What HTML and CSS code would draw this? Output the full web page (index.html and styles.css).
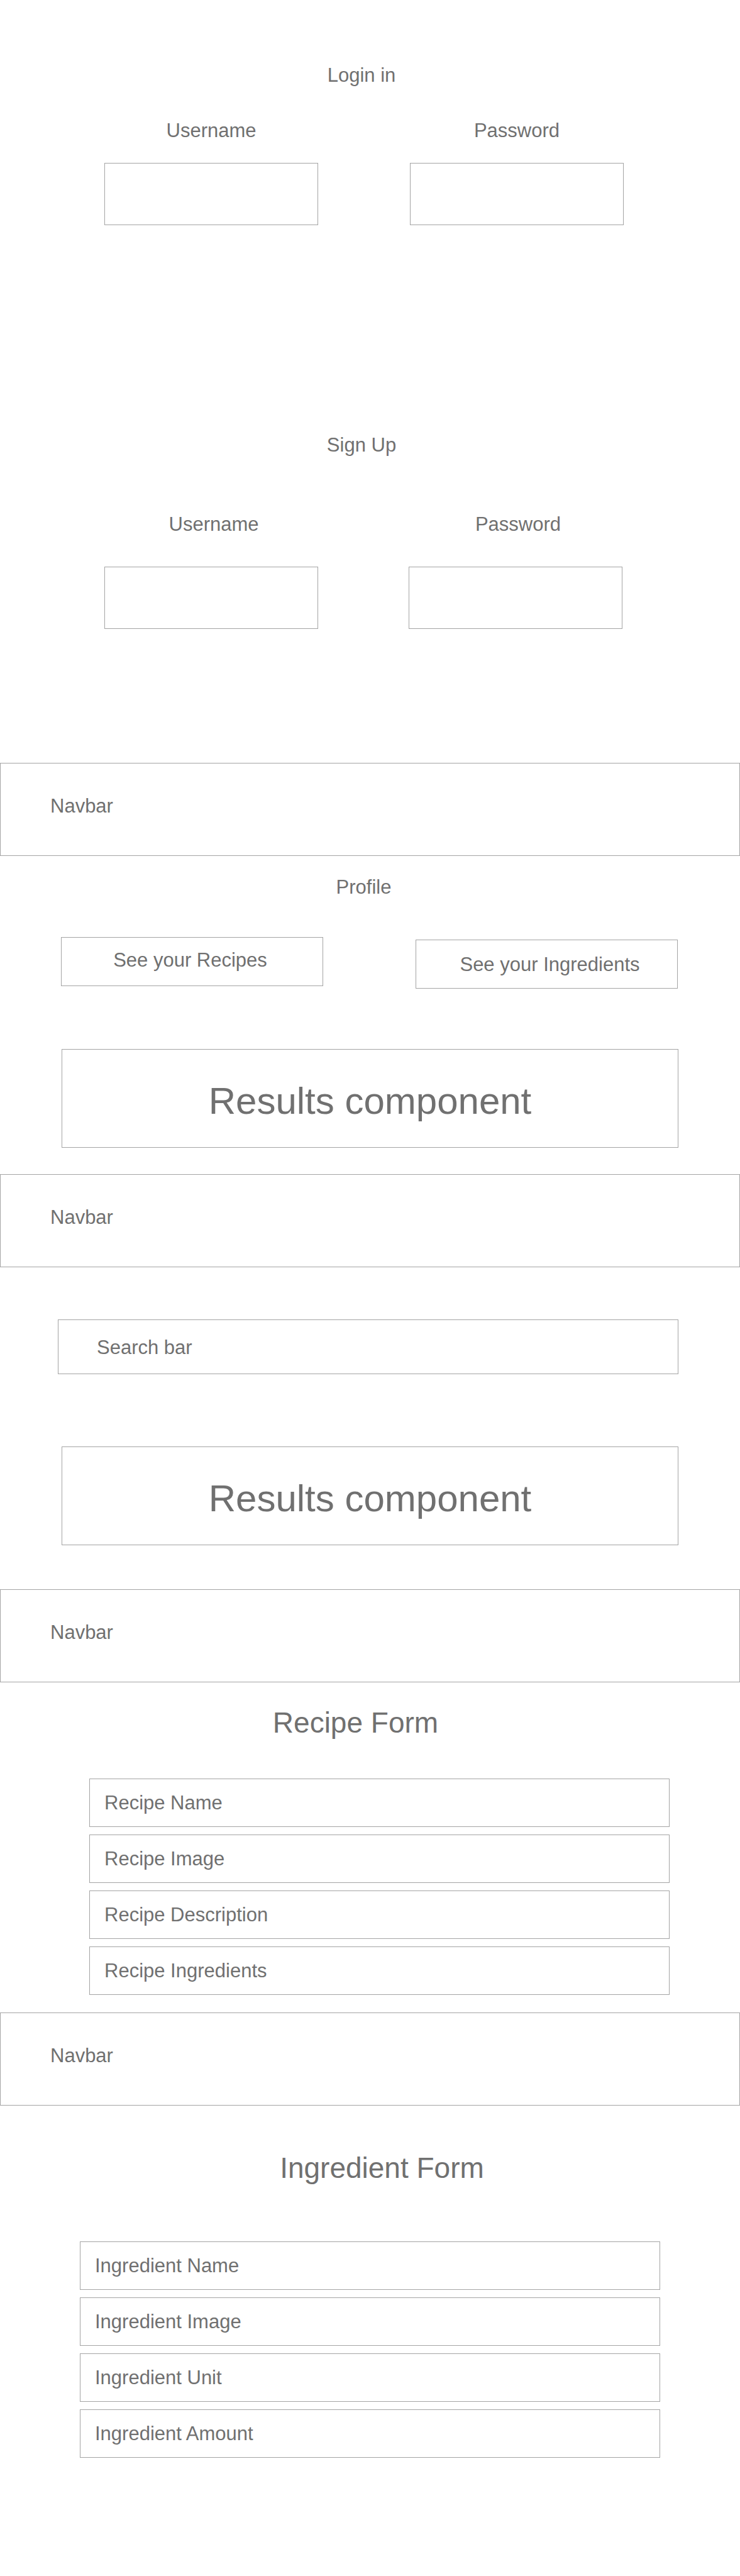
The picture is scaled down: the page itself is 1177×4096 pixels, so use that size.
FILE: index.html
```html
<!DOCTYPE html>
<html lang="en">
<head>
  <meta charset="utf-8">
  <meta name="viewport" content="width=device-width, initial-scale=1">
  <title>Recipes</title>
  <link rel="stylesheet" href="styles.css">
</head>
<body>
  <main>
    <form class="auth auth-login">
      <h2 class="title">Login in</h2>
      <div class="auth-fields">
        <div class="auth-field">
          <label for="login-username">Username</label>
          <input class="box" id="login-username" type="text">
        </div>
        <div class="auth-field">
          <label for="login-password">Password</label>
          <input class="box" id="login-password" type="password">
        </div>
      </div>
    </form>

    <form class="auth auth-signup">
      <h2 class="title">Sign Up</h2>
      <div class="auth-fields">
        <div class="auth-field">
          <label for="signup-username">Username</label>
          <input class="box" id="signup-username" type="text">
        </div>
        <div class="auth-field">
          <label for="signup-password">Password</label>
          <input class="box" id="signup-password" type="password">
        </div>
      </div>
    </form>

    <section class="profile">
      <nav class="navbar box">Navbar</nav>
      <h2 class="title">Profile</h2>
      <div class="profile-actions">
        <button class="box action action-recipes" type="button">See your Recipes</button>
        <button class="box action action-ingredients" type="button">See your Ingredients</button>
      </div>
      <div class="results box">Results component</div>
    </section>

    <section class="search">
      <nav class="navbar box">Navbar</nav>
      <div class="search-row">
        <input class="box search-input" type="search" placeholder="Search bar" aria-label="Search bar">
      </div>
      <div class="results box">Results component</div>
    </section>

    <section class="recipe">
      <nav class="navbar box">Navbar</nav>
      <h2 class="form-title">Recipe Form</h2>
      <form class="fields">
        <input class="box field" type="text" placeholder="Recipe Name" aria-label="Recipe Name">
        <input class="box field" type="text" placeholder="Recipe Image" aria-label="Recipe Image">
        <input class="box field" type="text" placeholder="Recipe Description" aria-label="Recipe Description">
        <input class="box field" type="text" placeholder="Recipe Ingredients" aria-label="Recipe Ingredients">
      </form>
    </section>

    <section class="ingredient">
      <nav class="navbar box">Navbar</nav>
      <h2 class="form-title">Ingredient Form</h2>
      <form class="fields">
        <input class="box field" type="text" placeholder="Ingredient Name" aria-label="Ingredient Name">
        <input class="box field" type="text" placeholder="Ingredient Image" aria-label="Ingredient Image">
        <input class="box field" type="text" placeholder="Ingredient Unit" aria-label="Ingredient Unit">
        <input class="box field" type="text" placeholder="Ingredient Amount" aria-label="Ingredient Amount">
      </form>
    </section>
  </main>
</body>
</html>
```
FILE: styles.css
```css
* {
  box-sizing: border-box;
}

body {
  margin: 0;
  background: #fff;
  color: #707070;
  font-family: "Liberation Sans", Arial, Helvetica, sans-serif;
  font-size: 31px;
  line-height: 38px;
}

input,
button {
  font: inherit;
  color: inherit;
  border-radius: 0;
  appearance: none;
}

input::placeholder {
  color: #707070;
  opacity: 1;
}

.box {
  display: block;
  width: 100%;
  background: #fff;
  border: 1px solid #a4a4a4;
}

.title,
.form-title {
  margin: 0;
  font-weight: 400;
  text-align: center;
}

.title {
  font-size: 31px;
  line-height: 38px;
}

.form-title {
  font-size: 46px;
  line-height: 54px;
}

/* Login and sign up */
.auth .title {
  padding-right: 27px;
}

.auth-fields {
  display: grid;
  grid-template-columns: 1fr 1fr;
}

.auth-field {
  display: flex;
  flex-direction: column;
  text-align: center;
}

.auth-field .box {
  height: 99px;
  padding: 0 24px;
}

.auth-login {
  padding-top: 101px;
}

.auth-login .auth-fields {
  margin-top: 50px;
  padding: 0 185px 0 166px;
  column-gap: 146px;
}

.auth-login .auth-field {
  gap: 32px;
}

.auth-signup {
  padding: 331px 0 213px;
}

.auth-signup .auth-fields {
  margin-top: 88px;
  padding: 0 187px 0 166px;
  column-gap: 144px;
}

.auth-signup .auth-field {
  gap: 48px;
}

.auth-signup label {
  padding-left: 8px;
}

/* Shared page parts */
.navbar {
  min-height: 148px;
  padding: 49px 79px;
}

.results {
  width: auto;
  min-height: 157px;
  margin: 0 98px;
  padding: 47px 0 38px;
  font-size: 60px;
  line-height: 70px;
  text-align: center;
}

/* Profile */
.profile {
  padding-bottom: 42px;
}

.profile .title {
  margin-top: 31px;
  padding-right: 20px;
}

.profile-actions {
  display: grid;
  grid-template-columns: 1fr 1fr;
  align-items: start;
  column-gap: 147px;
  margin: 60px 0 96px;
  padding: 0 99px 0 97px;
}

.action {
  height: 78px;
}

.action-recipes {
  padding: 0 6px 4px 0;
}

.action-ingredients {
  margin-top: 4px;
  padding: 2px 0 0 10px;
}

/* Search */
.search {
  padding-bottom: 70px;
}

.search-row {
  margin: 83px 98px 115px 92px;
}

.search-input {
  height: 87px;
  padding: 2px 61px 0;
}

/* Recipe and ingredient forms */
.fields {
  display: grid;
  row-gap: 12px;
}

.field {
  height: 77px;
  padding: 0 23px;
}

.recipe {
  padding-bottom: 28px;
}

.recipe .form-title {
  margin: 37px 0 62px;
  padding-right: 46px;
}

.recipe .fields {
  padding: 0 112px 0 142px;
}

.ingredient {
  padding-bottom: 188px;
}

.ingredient .form-title {
  margin: 72px 0 90px;
  padding-left: 38px;
}

.ingredient .fields {
  padding: 0 127px;
}
```
